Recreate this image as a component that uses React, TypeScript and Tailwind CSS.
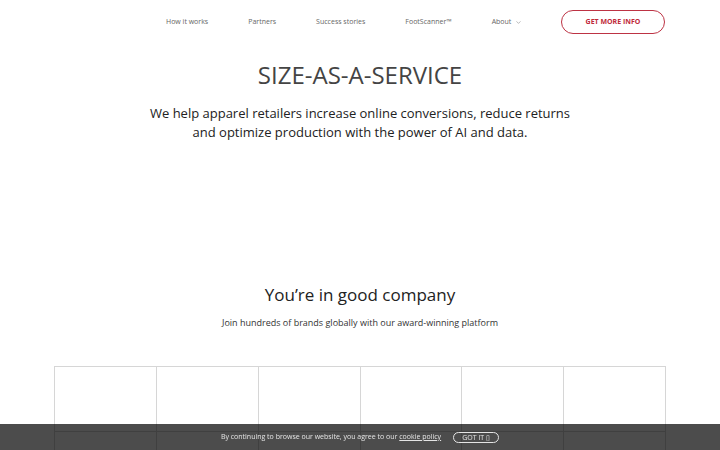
import { ChevronDown } from "lucide-react";

const navLinks = ["How it works", "Partners", "Success stories", "FootScanner™"];

function Header() {
  return (
    <header className="flex h-[44px] items-center pl-[166px] pr-[55px]">
      <nav className="flex items-center text-[7px] text-[#666]">
        {navLinks.map((label) => (
          <a key={label} className="mr-[40px] whitespace-nowrap">
            {label}
          </a>
        ))}
        <a className="flex items-center gap-[4px]">
          About
          <ChevronDown className="h-[7px] w-[7px]" strokeWidth={1.5} />
        </a>
      </nav>
      <button className="ml-auto h-[24px] w-[104px] rounded-full border-[1.5px] border-[#bd3344] text-[7px] font-bold text-[#c02a3a]">
        GET MORE INFO
      </button>
    </header>
  );
}

function LogoGrid() {
  return (
    <div className="mx-[54px] grid grid-cols-6 border-l border-t border-[#d6d6d6]">
      {Array.from({ length: 12 }).map((_, i) => (
        <div key={i} className="h-[65px] border-b border-r border-[#d6d6d6]" />
      ))}
    </div>
  );
}

function CookieBar() {
  return (
    <div className="fixed inset-x-0 bottom-0 flex h-[26px] items-center justify-center gap-[12px] bg-black/70 text-[7px] text-[#e4e4e4]">
      <span>
        By continuing to browse our website, you agree to our{" "}
        <a className="underline">cookie policy</a>
      </span>
      <button className="flex h-[11px] w-[46px] items-center justify-center rounded-full border border-[#e4e4e4] text-[7px] leading-none">
        GOT IT ▯
      </button>
    </div>
  );
}

export default function App() {
  return (
    <div
      className="relative h-[450px] w-[720px] overflow-hidden bg-white"
      style={{ fontFamily: '"Open Sans", sans-serif' }}
    >
      <Header />
      <section className="text-center">
        <h1 className="mt-[16px] text-[24px] leading-[30px] text-[#444]">
          SIZE-AS-A-SERVICE
        </h1>
        <p className="mx-auto mt-[14px] w-[440px] text-[13px] leading-[19px] text-[#222]">
          We help apparel retailers increase online conversions, reduce returns
          and optimize production with the power of AI and data.
        </p>
      </section>
      <section className="mt-[141px] text-center">
        <h2 className="text-[17px] leading-[24px] text-[#222]">
          You’re in good company
        </h2>
        <p className="mt-[9px] text-[9px] leading-[14px] text-[#333]">
          Join hundreds of brands globally with our award-winning platform
        </p>
      </section>
      <div className="mt-[36px]">
        <LogoGrid />
      </div>
      <CookieBar />
    </div>
  );
}
